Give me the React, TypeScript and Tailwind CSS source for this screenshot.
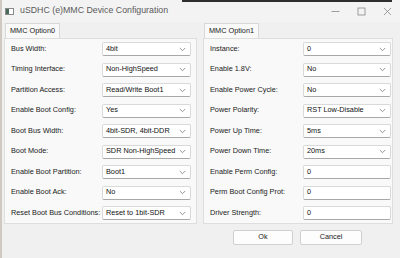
import React from "react";

const leftRows: [string, string][] = [
  ["Bus Width:", "4bit"],
  ["Timing Interface:", "Non-HighSpeed"],
  ["Partition Access:", "Read/Write Boot1"],
  ["Enable Boot Config:", "Yes"],
  ["Boot Bus Width:", "4bit-SDR, 4bit-DDR"],
  ["Boot Mode:", "SDR Non-HighSpeed"],
  ["Enable Boot Partition:", "Boot1"],
  ["Enable Boot Ack:", "No"],
  ["Reset Boot Bus Conditions:", "Reset to 1bit-SDR"],
];

const rightRows: { label: string; value: string; input?: boolean }[] = [
  { label: "Instance:", value: "0" },
  { label: "Enable 1.8V:", value: "No" },
  { label: "Enable Power Cycle:", value: "No" },
  { label: "Power Polarity:", value: "RST Low-Disable" },
  { label: "Power Up Time:", value: "5ms" },
  { label: "Power Down Time:", value: "20ms" },
  { label: "Enable Perm Config:", value: "0", input: true },
  { label: "Perm Boot Config Prot:", value: "0", input: true },
  { label: "Driver Strength:", value: "0", input: true },
];

function Chevron() {
  return (
    <svg width="7" height="5" viewBox="0 0 7 5" className="shrink-0">
      <path d="M0.8 1 L3.5 3.7 L6.2 1" fill="none" stroke="#7a7a7a" strokeWidth="0.8" />
    </svg>
  );
}

function Field({ value, input }: { value: string; input?: boolean }) {
  return (
    <div className="h-[14px] flex items-center justify-between pl-[3px] pr-[4px] bg-white border border-[#d9d9d9] border-b-[#a8a8a8] rounded-[2px] whitespace-nowrap">
      <span>{value}</span>
      {!input && <Chevron />}
    </div>
  );
}

function Panel({
  tab,
  rows,
  labelCol,
}: {
  tab: string;
  rows: { label: string; value: string; input?: boolean }[];
  labelCol: string;
}) {
  return (
    <div className="flex flex-col">
      <div className="flex">
        <div className="ml-[1px] h-[15px] px-[4px] flex items-center bg-[#f9f9f9] border border-b-0 border-[#d8d8d8] text-[#1a1a1a]">
          {tab}
        </div>
      </div>
      <div className="bg-[#f9f9f9] border border-[#dedede] pt-[3px] pb-[3px] pl-[6px] pr-[6px] flex flex-col gap-[6.5px]">
        {rows.map((r) => (
          <div key={r.label} className={`grid ${labelCol} items-center`}>
            <span className="text-[#1a1a1a] whitespace-nowrap">{r.label}</span>
            <Field value={r.value} input={r.input} />
          </div>
        ))}
      </div>
    </div>
  );
}

export default function App() {
  return (
    <div
      className="w-[400px] h-[258px] bg-[#f0f0f0] relative overflow-hidden text-[7.3px] text-[#111]"
      style={{ fontFamily: '"Liberation Sans", Arial, sans-serif' }}
    >
      <div className="absolute top-0 left-[182px] w-[210px] h-[2px] bg-[#2e2e2e]" />
      <div className="absolute top-0 left-0 w-[2px] h-[258px] bg-[#cfc9c2]" />

      <div className="h-[22px] flex items-center pl-[5px] pr-[8px] bg-[#f3f3f3]">
        <svg width="9" height="7" viewBox="0 0 9 7" className="mr-[6px]">
          <rect x="0.5" y="0.5" width="8" height="6" fill="#fff" stroke="#8a8a8a" />
          <rect x="1" y="1" width="3" height="5" fill="#4a6a5a" />
        </svg>
        <span className="text-[8.8px] text-[#5a5a5a]">uSDHC (e)MMC Device Configuration</span>
        <div className="ml-auto flex items-center gap-[17px] text-[#777]">
          <svg width="9" height="9" viewBox="0 0 9 9">
            <path d="M0.5 4.5 H8.5" stroke="#888" strokeWidth="0.8" />
          </svg>
          <svg width="9" height="9" viewBox="0 0 9 9">
            <rect x="1" y="1" width="7" height="7" fill="none" stroke="#888" strokeWidth="0.8" />
          </svg>
          <svg width="9" height="9" viewBox="0 0 9 9">
            <path d="M1 1 L8 8 M8 1 L1 8" stroke="#888" strokeWidth="0.8" />
          </svg>
        </div>
      </div>

      <div className="flex gap-[6px] pl-[4px] pr-[7px] pt-[1px]">
        <div className="w-[193px]">
          <Panel tab="MMC Option0" rows={leftRows.map(([label, value]) => ({ label, value }))} labelCol="grid-cols-[91px_89px]" />
        </div>
        <div className="w-[190px]">
          <Panel tab="MMC Option1" rows={rightRows} labelCol="grid-cols-[93px_88px]" />
        </div>
      </div>

      <div className="flex justify-end gap-[7px] pr-[38px] mt-[6px]">
        <button className="w-[60px] h-[15px] bg-[#fdfdfd] border border-[#d0d0d0] rounded-[2px] text-[#1a1a1a]">Ok</button>
        <button className="w-[62px] h-[15px] bg-[#fdfdfd] border border-[#d0d0d0] rounded-[2px] text-[#1a1a1a]">Cancel</button>
      </div>
    </div>
  );
}
